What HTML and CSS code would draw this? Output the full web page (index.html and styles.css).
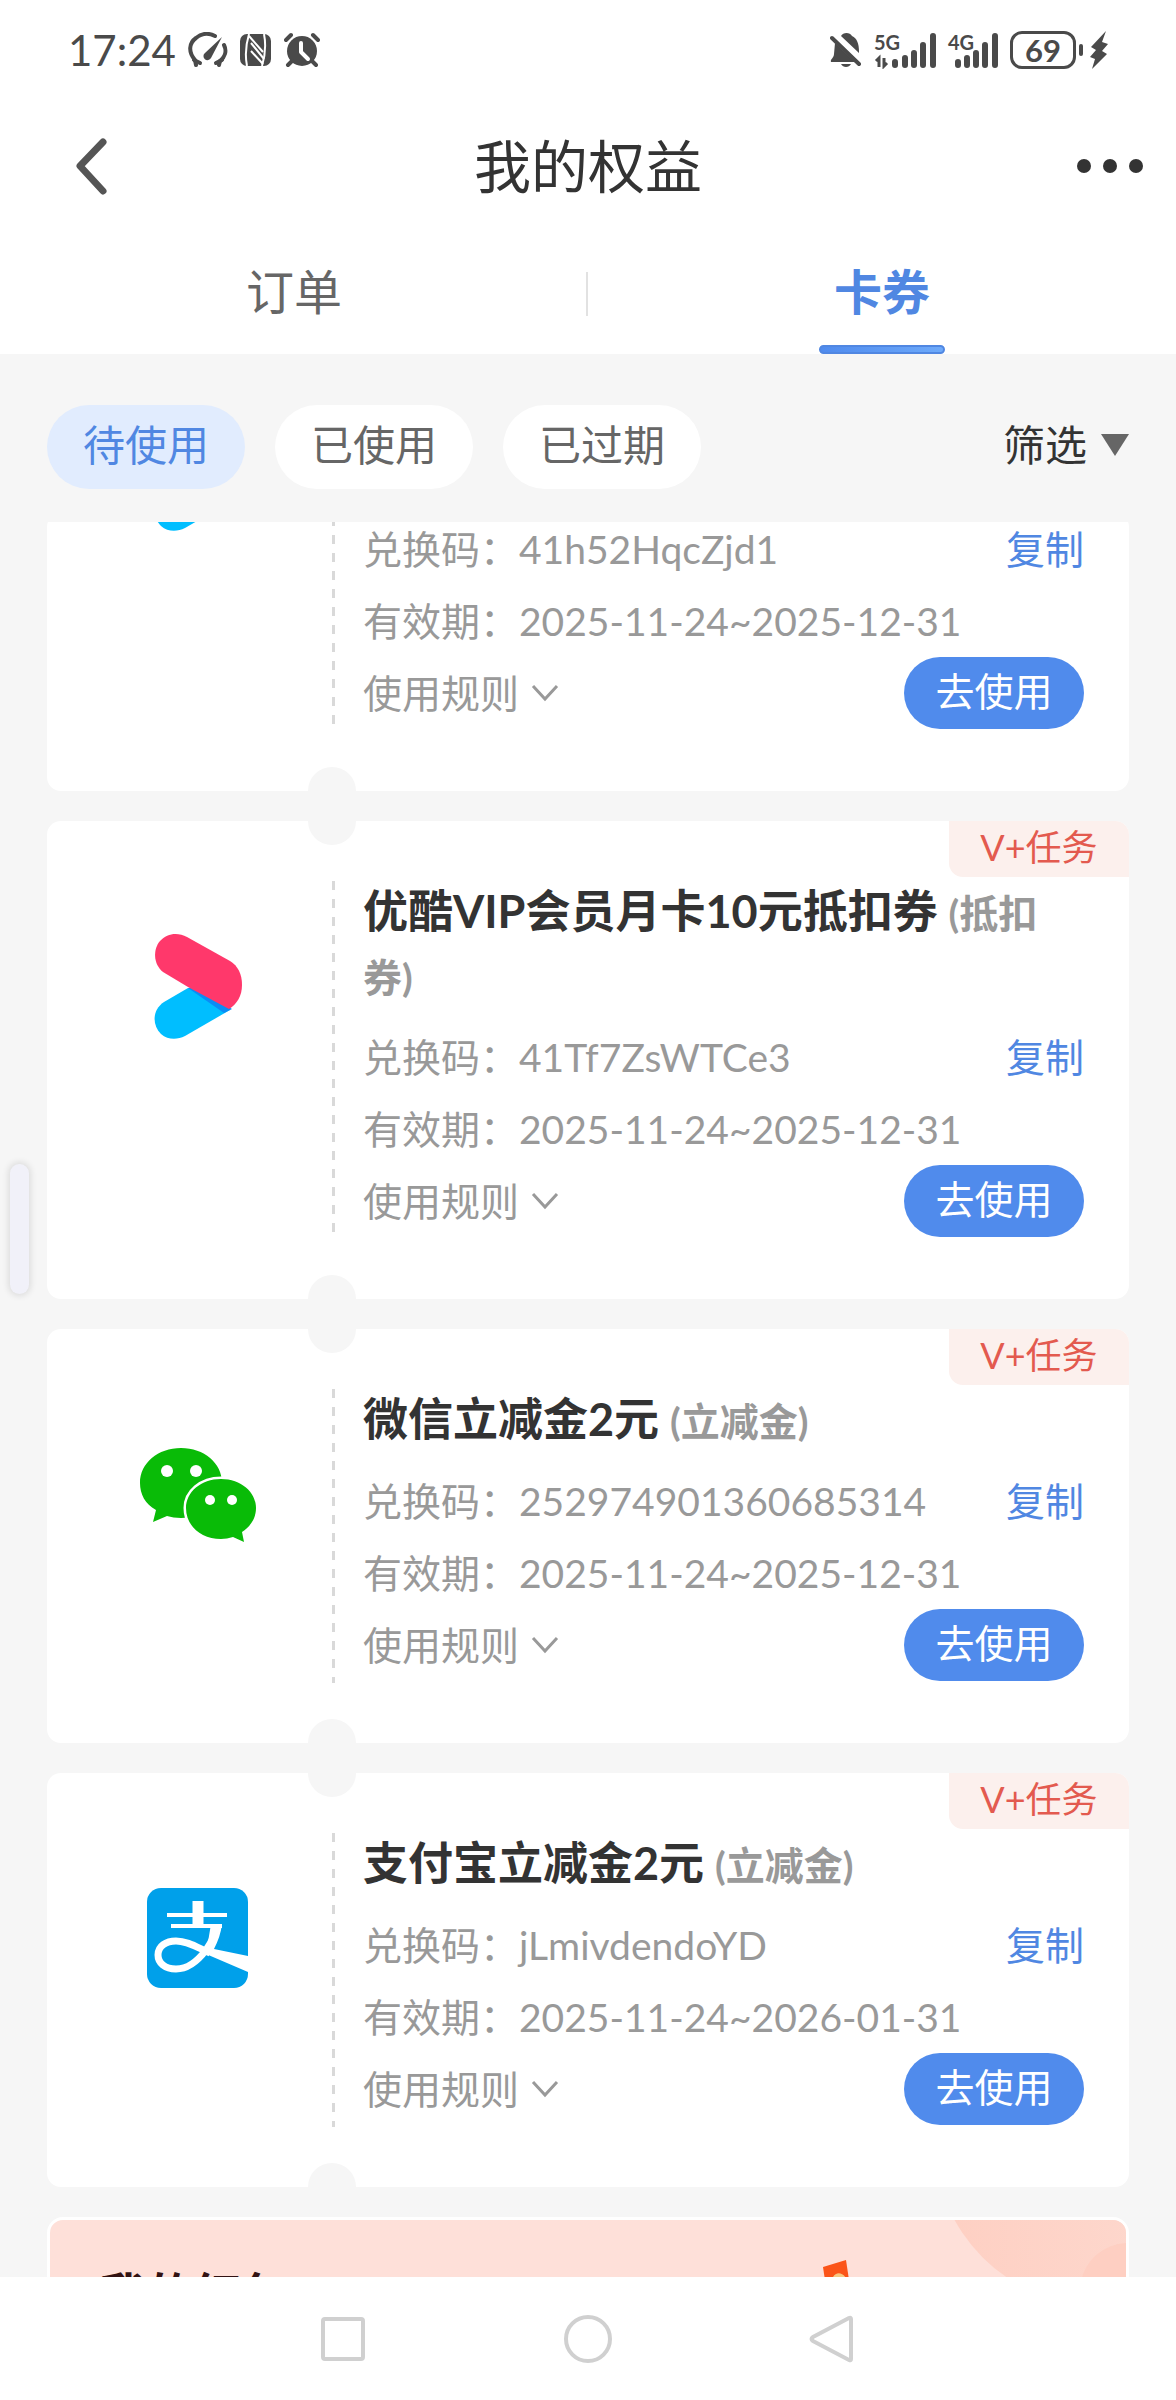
FILE: index.html
```html
<!DOCTYPE html>
<html lang="zh-CN">
<head>
    <meta charset="UTF-8">
    <meta name="viewport" content="width=device-width, initial-scale=1.0">
    <title>我的权益</title>
    <link rel="stylesheet" href="styles.css">
</head>
<body>
    <!-- 公用图标 -->
    <svg class="sprite" aria-hidden="true">
        <symbol id="logo-youku" viewBox="0 0 120 120">
            <path d="M50 61 L26 75 C14 83 14 98 23 107 C30 113 39 113 47 109 L92 83 L70 62 Z" fill="#00beff"/>
            <path d="M50 61 L58 60 L94 82 L86 86 Z" fill="#0b8cf5"/>
            <path d="M50 60 L91 82 C99 77 104 69 104 58 C104 47 100 39 92 34 L49 10 C40 5 29 6 22 14 C15 22 15 37 25 45 Z" fill="#ff386b"/>
        </symbol>
        <symbol id="icon-down" viewBox="0 0 28 18">
            <path d="M2 2 L14 15 L26 2" fill="none" stroke="#999" stroke-width="3"/>
        </symbol>
    </svg>

    <div class="status-bar">
        <div class="status-left">
            <span class="status-time">17:24</span>
            <svg width="40" height="36" viewBox="0 0 40 36" fill="none" stroke="#4a4a4a">
                <path d="M8 33 L7 28 C0 20 1 11 8 6 C14 1 21 1 27 4" stroke-width="4" stroke-linecap="round"/>
                <path d="M36 13 C39 19 37 25 32 29 L31 33" stroke-width="4" stroke-linecap="round"/>
                <path d="M6 28 L12 31 M34 28 L28 31" stroke-width="4" stroke-linecap="round"/>
                <path d="M34 5 L23 26 A4 4 0 1 1 17 21 Z" fill="#4a4a4a" stroke="none"/>
            </svg>
            <svg width="32" height="36" viewBox="0 0 32 36">
                <rect x="0" y="2" width="31" height="32" rx="7" fill="#4a4a4a"/>
                <path d="M7 34 C5 24 6 12 9 2 M24 2 C26 12 25 24 22 34" fill="none" stroke="#fff" stroke-width="2"/>
                <path d="M9 4 L23 20 M11 11 L24 27 M11 19 L23 32" fill="none" stroke="#fff" stroke-width="2"/>
            </svg>
            <svg width="36" height="36" viewBox="0 0 36 36">
                <circle cx="18" cy="19" r="15" fill="#4a4a4a"/>
                <path d="M2 8 L7 3 M34 8 L29 3 M8 29 L4 33 M28 29 L32 33" stroke="#4a4a4a" stroke-width="4" stroke-linecap="round"/>
                <path d="M17 11 V20 L24 27" fill="none" stroke="#fff" stroke-width="4" stroke-linecap="round" stroke-linejoin="round"/>
            </svg>
        </div>
        <div class="status-right">
            <svg width="32" height="38" viewBox="0 0 32 38">
                <path d="M11 5 C13 1 20 1 22 5 C27 7 29 13 29 20 V22 Z" fill="#4a4a4a"/>
                <path d="M5 12 L25 31 H1 C0 28 4 27 4 23 Z" fill="#4a4a4a"/>
                <path d="M2 7 L29 33" stroke="#4a4a4a" stroke-width="4" stroke-linecap="round"/>
                <path d="M11 33 H21 C19 37 13 37 11 33 Z" fill="#4a4a4a"/>
            </svg>
            <div class="signal">
                <span class="signal-type">5G</span>
                <svg width="62" height="38" viewBox="0 0 62 38" stroke="#4a4a4a">
                    <path d="M5 36 V27 L2 30 M10 27 V35 L13 32" fill="none" stroke-width="3"/>
                    <path d="M21 31 V34 M31 27 V34 M40 22 V34 M49 14 V34 M59 5 V34" stroke-width="6" stroke-linecap="round"/>
                </svg>
            </div>
            <div class="signal">
                <span class="signal-type">4G</span>
                <svg width="50" height="38" viewBox="0 0 50 38" stroke="#4a4a4a">
                    <path d="M10 31 V34 M19 27 V34 M28 22 V34 M37 14 V34 M47 5 V34" stroke-width="6" stroke-linecap="round"/>
                </svg>
            </div>
            <div class="battery">69</div>
            <svg width="18" height="38" viewBox="0 0 18 38">
                <path d="M16 0 L1 16 L6 19 L0 26 L5 28 L2 38 L17 23 L12 20 L18 13 L12 11 Z" fill="#4a4a4a"/>
            </svg>
        </div>
    </div>

    <header class="header">
        <button class="back-btn" aria-label="返回">
            <svg width="34" height="60" viewBox="0 0 34 60">
                <path d="M29 6 L6 30 L29 55" fill="none" stroke="#555" stroke-width="7" stroke-linecap="round" stroke-linejoin="round"/>
            </svg>
        </button>
        <h1 class="header-title">我的权益</h1>
        <button class="more-btn" aria-label="更多">
            <span class="dot"></span>
            <span class="dot"></span>
            <span class="dot"></span>
        </button>
    </header>

    <nav class="tabs">
        <a class="tab" href="#orders">订单</a>
        <a class="tab active" href="#coupons">卡券</a>
    </nav>

    <div class="filter-bar">
        <button class="chip active">待使用</button>
        <button class="chip">已使用</button>
        <button class="chip">已过期</button>
        <button class="filter-btn">筛选<span class="triangle"></span></button>
    </div>

    <main class="list" id="coupons">
        <div class="list-inner">
            <!-- 顶部滚出一半的卡券 -->
            <section class="coupon partial">
                <svg class="coupon-logo"><use href="#logo-youku"/></svg>
                <div class="coupon-divider"></div>
                <div class="coupon-body">
                    <div class="row"><span>兑换码：41h52HqcZjd1</span><button class="copy-btn">复制</button></div>
                    <div class="row"><span>有效期：2025-11-24~2025-12-31</span></div>
                    <div class="row">
                        <button class="rule-btn">使用规则<svg class="rule-icon"><use href="#icon-down"/></svg></button>
                        <button class="use-btn">去使用</button>
                    </div>
                </div>
            </section>

            <section class="coupon">
                <span class="coupon-tag">V+任务</span>
                <svg class="coupon-logo"><use href="#logo-youku"/></svg>
                <div class="coupon-divider"></div>
                <div class="coupon-body">
                    <h2 class="coupon-title">优酷VIP会员月卡10元抵扣券 <small>(抵扣券)</small></h2>
                    <div class="row"><span>兑换码：41Tf7ZsWTCe3</span><button class="copy-btn">复制</button></div>
                    <div class="row"><span>有效期：2025-11-24~2025-12-31</span></div>
                    <div class="row">
                        <button class="rule-btn">使用规则<svg class="rule-icon"><use href="#icon-down"/></svg></button>
                        <button class="use-btn">去使用</button>
                    </div>
                </div>
            </section>

            <section class="coupon">
                <span class="coupon-tag">V+任务</span>
                <svg class="coupon-logo" viewBox="0 0 120 120">
                    <g fill="#09bb07">
                        <path d="M43 13 C66 13 84 28 84 48 C84 68 66 83 43 83 C38 83 33 82 29 81 L15 87 L18 75 C7 69 2 59 2 48 C2 28 20 13 43 13 Z"/>
                        <path d="M83 44 C103 44 118 57 118 73 C118 83 113 91 104 97 L106 107 L95 102 C91 103 87 104 83 104 C63 104 48 91 48 73 C48 57 63 44 83 44 Z" stroke="#fff" stroke-width="5" paint-order="stroke"/>
                    </g>
                    <g fill="#fff">
                        <circle cx="29" cy="36" r="6"/>
                        <circle cx="58" cy="36" r="6"/>
                        <circle cx="72" cy="65" r="5"/>
                        <circle cx="94" cy="65" r="5"/>
                    </g>
                </svg>
                <div class="coupon-divider"></div>
                <div class="coupon-body">
                    <h2 class="coupon-title">微信立减金2元 <small>(立减金)</small></h2>
                    <div class="row"><span>兑换码：252974901360685314</span><button class="copy-btn">复制</button></div>
                    <div class="row"><span>有效期：2025-11-24~2025-12-31</span></div>
                    <div class="row">
                        <button class="rule-btn">使用规则<svg class="rule-icon"><use href="#icon-down"/></svg></button>
                        <button class="use-btn">去使用</button>
                    </div>
                </div>
            </section>

            <section class="coupon">
                <span class="coupon-tag">V+任务</span>
                <svg class="coupon-logo" viewBox="0 0 120 120">
                    <rect x="9" y="9" width="101" height="100" rx="14" fill="#00a0ea"/>
                    <g fill="none" stroke="#fff">
                        <path d="M60 22 V48" stroke-width="11"/>
                        <path d="M29 36 H89 M33 47 H84" stroke-width="4"/>
                        <path d="M79 47 C77 56 73 64 68 71 C59 83 49 90 38 90 C27 90 20 84 20 76 C20 67 28 62 38 62 C50 62 60 69 72 74" stroke-width="7"/>
                    </g>
                    <path d="M73 45 H84 C83 54 80 62 76 70 L110 77 V93 L68 75 Z" fill="#fff"/>
                </svg>
                <div class="coupon-divider"></div>
                <div class="coupon-body">
                    <h2 class="coupon-title">支付宝立减金2元 <small>(立减金)</small></h2>
                    <div class="row"><span>兑换码：jLmivdendoYD</span><button class="copy-btn">复制</button></div>
                    <div class="row"><span>有效期：2025-11-24~2026-01-31</span></div>
                    <div class="row">
                        <button class="rule-btn">使用规则<svg class="rule-icon"><use href="#icon-down"/></svg></button>
                        <button class="use-btn">去使用</button>
                    </div>
                </div>
            </section>

            <section class="banner">
                <h2 class="banner-title">我的红包</h2>
                <svg class="banner-art" width="310" height="160" viewBox="0 0 310 160">
                    <defs>
                        <linearGradient id="bubble" x1="0" y1="0" x2="1" y2="0">
                            <stop offset="0" stop-color="#fecfc2"/>
                            <stop offset="1" stop-color="#fddcd3"/>
                        </linearGradient>
                    </defs>
                    <circle cx="284" cy="-80" r="166" fill="url(#bubble)"/>
                    <circle cx="312" cy="71" r="48" fill="#fecfc2"/>
                    <path d="M7 47 L30 40 L36 80 L12 80 Z" fill="#fb5418"/>
                    <path d="M17 57 C20 52 26 52 30 58 L32 80 H18 Z" fill="#f7c77f"/>
                </svg>
            </section>
        </div>
    </main>

    <div class="side-handle"></div>

    <nav class="system-nav">
        <button aria-label="最近任务">
            <svg width="50" height="50" viewBox="0 0 50 50"><rect x="5" y="5" width="40" height="40" rx="2"/></svg>
        </button>
        <button aria-label="主屏幕">
            <svg width="50" height="50" viewBox="0 0 50 50"><circle cx="25" cy="25" r="22"/></svg>
        </button>
        <button aria-label="返回上一页">
            <svg width="50" height="50" viewBox="0 0 50 50"><path d="M43 5 V45 Q43 47 41 46 L5 27 Q2 25 5 23 L41 4 Q43 3 43 5 Z"/></svg>
        </button>
    </nav>
</body>
</html>
```
FILE: styles.css
```css
*,
*::before,
*::after {
    margin: 0;
    padding: 0;
    box-sizing: border-box;
}

body {
    height: 100vh;
    display: flex;
    flex-direction: column;
    background: #f6f6f6;
    color: #333;
    font-family: Lato, "Noto Sans CJK SC", sans-serif;
    overflow: hidden;
}

button {
    border: none;
    background: none;
    color: inherit;
    font: inherit;
    cursor: pointer;
}

a {
    text-decoration: none;
}

svg {
    display: block;
}

.sprite {
    position: absolute;
    width: 0;
    height: 0;
}

/* 状态栏 */
.status-bar {
    display: flex;
    justify-content: space-between;
    align-items: center;
    height: 100px;
    padding: 0 68px;
    background: #fff;
    color: #4a4a4a;
}

.status-left,
.status-right {
    display: flex;
    align-items: center;
    gap: 12px;
}

.status-time {
    font-size: 42px;
    line-height: 48px;
}

.signal {
    position: relative;
}

.signal-type {
    position: absolute;
    top: 0;
    left: 0;
    font-size: 20px;
    line-height: 22px;
    font-weight: bold;
}

.battery {
    position: relative;
    width: 66px;
    height: 38px;
    margin-right: 2px;
    border: 3px solid #4a4a4a;
    border-radius: 12px;
    font-size: 31px;
    line-height: 32px;
    font-weight: bold;
    text-align: center;
}

.battery::after {
    content: "";
    position: absolute;
    top: 10px;
    right: -10px;
    width: 4px;
    height: 12px;
    border-radius: 2px;
    background: #4a4a4a;
}

/* 标题栏 */
.header {
    display: flex;
    justify-content: space-between;
    align-items: center;
    height: 132px;
    padding: 0 33px 0 74px;
    background: #fff;
}

.back-btn,
.more-btn {
    display: flex;
    align-items: center;
    width: 66px;
    height: 66px;
}

.more-btn {
    justify-content: space-between;
    margin-left: 41px;
}

.dot {
    width: 14px;
    height: 14px;
    border-radius: 50%;
    background: #333;
}

.header-title {
    font-size: 57px;
    line-height: 66px;
    font-weight: normal;
}

/* 页签 */
.tabs {
    position: relative;
    display: flex;
    height: 122px;
    background: #fff;
}

.tabs::before {
    content: "";
    position: absolute;
    top: 40px;
    left: 50%;
    width: 2px;
    height: 44px;
    margin-left: -2px;
    background: #e2e2e2;
}

.tab {
    position: relative;
    flex: 1;
    font-size: 48px;
    line-height: 120px;
    text-align: center;
    color: #666;
}

.tab.active {
    color: #5087e2;
    font-weight: bold;
}

.tab.active::after {
    content: "";
    position: absolute;
    left: 50%;
    bottom: 0;
    width: 126px;
    height: 9px;
    margin-left: -63px;
    border: 2px solid #5087e2;
    border-radius: 5px;
    background: linear-gradient(90deg, #4f8bee, #6eaafa);
}

/* 筛选 */
.filter-bar {
    display: flex;
    align-items: center;
    gap: 30px;
    padding: 51px 47px 33px;
}

.chip {
    width: 198px;
    height: 84px;
    border-radius: 42px;
    background: #fff;
    color: #666;
    font-size: 42px;
    line-height: 80px;
    padding-bottom: 4px;
}

.chip.active {
    background: #e1ecfe;
    color: #5087e2;
}

.filter-btn {
    display: flex;
    align-items: center;
    gap: 14px;
    margin-left: auto;
    font-size: 42px;
    line-height: 80px;
    padding-bottom: 4px;
}

.triangle {
    border: 14px solid transparent;
    border-top: 22px solid #666;
    border-bottom: none;
}

/* 卡券列表 */
.list {
    flex: 1;
    min-height: 0;
    padding: 0 47px;
    overflow: hidden;
}

.list-inner {
    display: flex;
    flex-direction: column;
    gap: 30px;
    margin-top: -9px;
}

.coupon {
    position: relative;
    display: flex;
    background: #fff;
    border-radius: 14px;
}

/* 票券上下缺口 */
.coupon::before,
.coupon::after {
    content: "";
    position: absolute;
    left: 261px;
    width: 48px;
    height: 24px;
    background: #f6f6f6;
}

.coupon::before {
    top: 0;
    border-radius: 0 0 24px 24px;
}

.coupon::after {
    bottom: 0;
    border-radius: 24px 24px 0 0;
}

.coupon-tag {
    position: absolute;
    top: 0;
    right: 0;
    width: 180px;
    height: 56px;
    border-radius: 0 14px 0 14px;
    background: #fcf0ed;
    color: #e35a4f;
    font-size: 36px;
    line-height: 52px;
    text-align: center;
}

.coupon-logo {
    flex: none;
    width: 120px;
    height: 120px;
    margin: 106px 74px 0 91px;
}

.coupon-divider {
    flex: none;
    width: 3px;
    margin: 60px 0;
    background: repeating-linear-gradient(#d9d9d9 0 9px, transparent 9px 18px);
}

.coupon-body {
    flex: 1;
    padding: 58px 45px 62px 28px;
}

.coupon-title {
    margin-bottom: 14px;
    font-size: 45px;
    line-height: 64px;
    font-weight: bold;
}

.coupon-title small {
    font-size: 39px;
    line-height: 1;
    color: #999;
}

/* 只露出下半部分 */
.partial::before {
    display: none;
}

.partial .coupon-logo {
    margin-top: -94px;
}

.partial .coupon-divider {
    margin-top: -140px;
}

.partial .coupon-body {
    padding-top: 0;
}

.row {
    display: flex;
    justify-content: space-between;
    align-items: center;
    height: 72px;
    font-size: 39px;
    line-height: 72px;
    color: #999;
}

.copy-btn {
    color: #5087e2;
}

.rule-btn {
    display: flex;
    align-items: center;
    gap: 12px;
}

.rule-icon {
    width: 28px;
    height: 18px;
}

.use-btn {
    width: 180px;
    height: 72px;
    border-radius: 36px;
    background: #508bec;
    color: #fff;
    line-height: 68px;
    padding-bottom: 4px;
}

/* 红包横幅 */
.banner {
    position: relative;
    height: 240px;
    padding: 42px 50px;
    border: 3px solid #fff;
    border-radius: 16px;
    background: #fee0d9;
    overflow: hidden;
}

.banner-title {
    font-size: 47px;
    line-height: 64px;
    color: #331212;
}

.banner-art {
    position: absolute;
    top: 0;
    right: 0;
}

/* 侧边手柄 */
.side-handle {
    position: fixed;
    top: 1164px;
    left: 10px;
    width: 19px;
    height: 130px;
    border-radius: 10px;
    background: #f1f1f9;
    box-shadow: 0 0 6px 2px rgba(0, 0, 0, 0.1);
}

/* 系统导航 */
.system-nav {
    display: flex;
    justify-content: center;
    align-items: center;
    gap: 195px;
    height: 123px;
    background: #fff;
}

.system-nav svg {
    fill: none;
    stroke: #d0d0d0;
    stroke-width: 4;
}
```
